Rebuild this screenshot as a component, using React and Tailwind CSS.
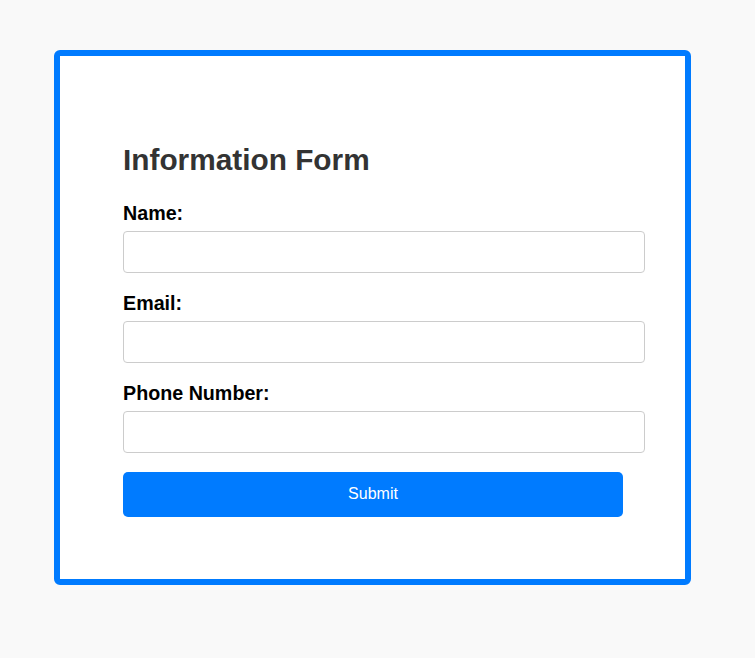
import React from "react";

export default function App() {
  const fields = [
    { label: "Name:", type: "text" },
    { label: "Email:", type: "email" },
    { label: "Phone Number:", type: "tel" },
  ];
  return (
    <div
      className="min-h-[658px] w-full bg-[#f9f9f9] pt-[50px] pl-[54px]"
      style={{ fontFamily: '"Liberation Sans", Arial, sans-serif' }}
    >
      <div className="w-[637px] h-[535px] border-[6px] border-[#007bff] rounded-[6px] bg-white pt-[87px] pl-[63px] pr-[40px] pb-[62px]">
        <h2 className="text-[29.8px] leading-[34px] font-bold text-[#333] mb-[25px]">
          Information Form
        </h2>
        <form onSubmit={(e) => e.preventDefault()}>
          {fields.map((f) => (
            <div key={f.label}>
              <label className="block text-[19.7px] leading-[23px] font-bold text-black mb-[6px]">
                {f.label}
              </label>
              <input
                type={f.type}
                className="block w-[522px] h-[42px] border border-[#ccc] rounded-[4px] px-[10px] mb-[19px] bg-white outline-none"
              />
            </div>
          ))}
          <button
            type="submit"
            className="block w-[500px] h-[45px] bg-[#007bff] text-white text-[16px] rounded-[5px] pb-[2px]"
          >
            Submit
          </button>
        </form>
      </div>
    </div>
  );
}
